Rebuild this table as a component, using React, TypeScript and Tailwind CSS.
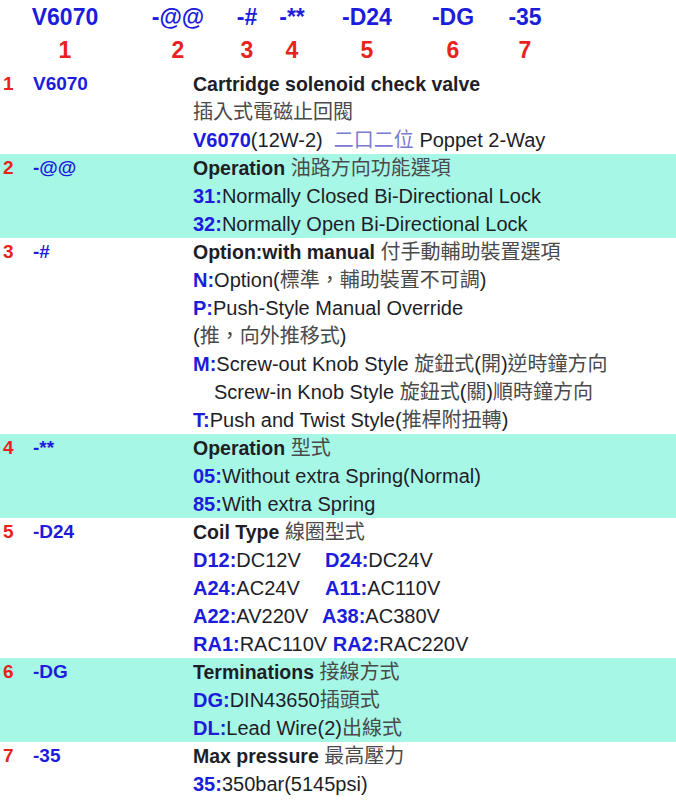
const blue = 'text-[#1c1cdc]'

type Line = React.ReactNode

type Row = {
  no: string
  code: string
  lines: Line[]
  shaded?: boolean
}

function K({ children }: { children: React.ReactNode }) {
  return <span className="font-bold text-[#1c1cdc]">{children}</span>
}

function C({ children }: { children: React.ReactNode }) {
  return <span className="text-[#4a4a4a]">{children}</span>
}

function T({ children }: { children: React.ReactNode }) {
  return <span className="font-bold text-[19.5px]">{children}</span>
}

const rows: Row[] = [
  {
    no: '1',
    code: 'V6070',
    lines: [
      <T>Cartridge solenoid check valve</T>,
      <C>插入式電磁止回閥</C>,
      <>
        <K>V6070</K>(12W-2)&nbsp; <span className="text-[#7a7ad0]">二口二位</span> Poppet 2-Way
      </>,
    ],
  },
  {
    no: '2',
    code: '-@@',
    shaded: true,
    lines: [
      <>
        <T>Operation</T> <C>油路方向功能選項</C>
      </>,
      <>
        <K>31:</K>Normally Closed Bi-Directional Lock
      </>,
      <>
        <K>32:</K>Normally Open Bi-Directional Lock
      </>,
    ],
  },
  {
    no: '3',
    code: '-#',
    lines: [
      <>
        <T>Option:with manual</T> <C>付手動輔助裝置選項</C>
      </>,
      <>
        <K>N:</K>Option(<C>標準，輔助裝置不可調</C>)
      </>,
      <>
        <K>P:</K>Push-Style Manual Override
      </>,
      <>
        (<C>推，向外推移式</C>)
      </>,
      <>
        <K>M:</K>Screw-out Knob Style <C>旋鈕式</C>(<C>開</C>)<C>逆時鐘方向</C>
      </>,
      <span className="pl-[21px]">
        Screw-in Knob Style <C>旋鈕式</C>(<C>關</C>)<C>順時鐘方向</C>
      </span>,
      <>
        <K>T:</K>Push and Twist Style(<C>推桿附扭轉</C>)
      </>,
    ],
  },
  {
    no: '4',
    code: '-**',
    shaded: true,
    lines: [
      <>
        <T>Operation</T> <C>型式</C>
      </>,
      <>
        <K>05:</K>Without extra Spring(Normal)
      </>,
      <>
        <K>85:</K>With extra Spring
      </>,
    ],
  },
  {
    no: '5',
    code: '-D24',
    lines: [
      <>
        <T>Coil Type</T> <C>線圈型式</C>
      </>,
      <div className="flex">
        <span className="w-[132px]">
          <K>D12:</K>DC12V
        </span>
        <span>
          <K>D24:</K>DC24V
        </span>
      </div>,
      <div className="flex">
        <span className="w-[132px]">
          <K>A24:</K>AC24V
        </span>
        <span>
          <K>A11:</K>AC110V
        </span>
      </div>,
      <div className="flex">
        <span className="w-[129px]">
          <K>A22:</K>AV220V
        </span>
        <span>
          <K>A38:</K>AC380V
        </span>
      </div>,
      <>
        <K>RA1:</K>RAC110V <K>RA2:</K>RAC220V
      </>,
    ],
  },
  {
    no: '6',
    code: '-DG',
    shaded: true,
    lines: [
      <>
        <T>Terminations</T> <C>接線方式</C>
      </>,
      <>
        <K>DG:</K>DIN43650<C>插頭式</C>
      </>,
      <>
        <K>DL:</K>Lead Wire(2)<C>出線式</C>
      </>,
    ],
  },
  {
    no: '7',
    code: '-35',
    lines: [
      <>
        <T>Max pressure</T> <C>最高壓力</C>
      </>,
      <>
        <K>35:</K>350bar(5145psi)
      </>,
    ],
  },
]

const header = [
  { code: 'V6070', no: '1', cls: 'ml-[20px] w-[90px]' },
  { code: '-@@', no: '2', cls: 'ml-[38px] w-[60px]' },
  { code: '-#', no: '3', cls: 'ml-[24px] w-[30px]' },
  { code: '-**', no: '4', cls: 'ml-[15px] w-[30px]' },
  { code: '-D24', no: '5', cls: 'ml-[25px] w-[70px]' },
  { code: '-DG', no: '6', cls: 'ml-[16px] w-[70px]' },
  { code: '-35', no: '7', cls: 'ml-[12px] w-[50px]' },
]

export default function App() {
  return (
    <div
      className="w-[676px] h-[800px] bg-white overflow-hidden text-[#1e1e28]"
      style={{ fontFamily: '"Liberation Sans", Arial, "Noto Sans CJK TC", sans-serif' }}
    >
      {/* code header */}
      <div className="flex h-[70px] pt-[1px]">
        {header.map((h) => (
          <div key={h.no} className={`${h.cls} flex flex-col items-center font-bold text-[23px] leading-[33px]`}>
            <span className={blue}>{h.code}</span>
            <span className="text-[#e8221c]">{h.no}</span>
          </div>
        ))}
      </div>

      {/* option rows */}
      {rows.map((r) => (
        <div key={r.no} className={`flex text-[20px] leading-[28px] ${r.shaded ? 'bg-[#a6f7e6]' : ''}`}>
          <div className="w-[33px] pl-[3px] font-bold text-[19px] text-[#e8221c]">{r.no}</div>
          <div className={`w-[160px] font-bold text-[19px] ${blue}`}>{r.code}</div>
          <div className="flex-1 flex flex-col">
            {r.lines.map((l, i) => (
              <div key={i} className="h-[28px] whitespace-nowrap">
                {l}
              </div>
            ))}
          </div>
        </div>
      ))}
    </div>
  )
}
